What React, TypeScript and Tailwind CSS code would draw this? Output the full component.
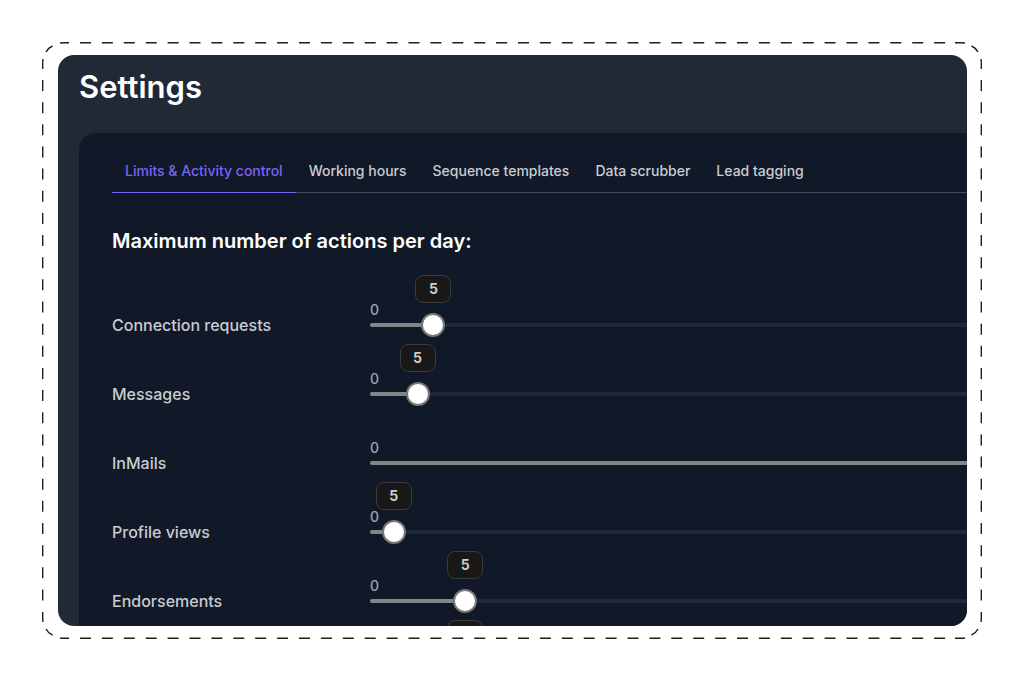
import { useState } from "react";

const tabs = [
  "Limits & Activity control",
  "Working hours",
  "Sequence templates",
  "Data scrubber",
  "Lead tagging",
];

const limits = [
  { id: "connections", label: "Connection requests", value: 5, max: 75 },
  { id: "messages", label: "Messages", value: 5, max: 100 },
  { id: "inmails", label: "InMails", value: 50, max: 50 },
  { id: "views", label: "Profile views", value: 5, max: 200 },
  { id: "endorsements", label: "Endorsements", value: 5, max: 50 },
  { id: "follows", label: "Follows", value: 5, max: 50 },
];

function DashedFrame() {
  return (
    <svg
      className="absolute inset-0 w-full h-full pointer-events-none"
      viewBox="0 0 940 597"
      preserveAspectRatio="none"
      fill="none"
      stroke="#1f1f1f"
      strokeWidth="1.4"
      aria-hidden="true"
    >
      {/* sides */}
      <path strokeDasharray="11 10.9" d="M38 .7H904M38 596.3H904" />
      <path strokeDasharray="11 11.15" d="M.7 38V568M939.3 38V568" />
      {/* short dashes beside each corner */}
      <path d="M27 .7H22Q20 .7 18 1M913 .7H919Q921 .7 923 1M27 596.3H22Q20 596.3 18 596M913 596.3H919Q921 596.3 923 596" />
      <path d="M.7 27V22Q.7 19 1 17M939.3 27V22Q939.3 19 939 17M.7 570V575Q.7 578 1 580M939.3 570V575Q939.3 578 939 580" />
      <path d="M4 10Q6 6 10.5 4M936 10Q934 6 929.5 4M4 587Q6 591 10.5 593M936 587Q934 591 929.5 593" />
    </svg>
  );
}

function LimitRow({ id, label, initial, max }: { id: string; label: string; initial: number; max: number }) {
  const [value, setValue] = useState(initial);
  const percent = (value / max) * 100;

  return (
    <div className="flex items-center h-[69px]">
      <label htmlFor={id} className="w-[258px] shrink-0 text-base font-medium text-[#c9ccd1]">
        {label}
      </label>
      <div className="relative flex-1 h-1 rounded-full bg-gray-800">
        <span className="absolute left-0 bottom-[9px] text-sm leading-4 font-medium text-[#9ca3af]">0</span>
        <div className="h-1 rounded-full bg-[#858585]" style={{ width: `${percent}%` }} />
        <output
          htmlFor={id}
          className="absolute bottom-6 -translate-x-1/2 w-9 h-7 flex items-center justify-center rounded-lg border border-[#3a3a3a] bg-[#181818] text-sm font-bold text-[#cccccc]"
          style={{ left: `${percent}%` }}
        >
          {value}
        </output>
        <input
          id={id}
          type="range"
          min={0}
          max={max}
          value={value}
          onChange={(e) => setValue(Number(e.target.value))}
          className="absolute -left-3 -top-2.5 h-6 w-[calc(100%+24px)] m-0 appearance-none bg-transparent cursor-pointer [&::-webkit-slider-thumb]:appearance-none [&::-webkit-slider-thumb]:w-6 [&::-webkit-slider-thumb]:h-6 [&::-webkit-slider-thumb]:rounded-full [&::-webkit-slider-thumb]:border-2 [&::-webkit-slider-thumb]:border-[#777777] [&::-webkit-slider-thumb]:bg-white"
        />
      </div>
    </div>
  );
}

export default function App() {
  const [active, setActive] = useState(tabs[0]);

  return (
    <main className="h-screen bg-white p-[42px] font-['Inter',sans-serif]">
      <div className="relative h-full pl-4 pr-[15px] py-[13px]">
        <DashedFrame />
        <div className="h-full overflow-hidden rounded-2xl bg-[#212937] pl-[21px] pt-3">
          <h1 className="text-[31px] leading-10 font-semibold text-white">Settings</h1>

          <section className="mt-[26px] w-[1276px] rounded-2xl bg-[#111827] px-[33px] pt-7">
            <div role="tablist" className="flex border-b border-[#414a57]">
              {tabs.map((tab) => (
                <button
                  key={tab}
                  type="button"
                  role="tab"
                  aria-selected={tab === active}
                  onClick={() => setActive(tab)}
                  className={
                    tab === active
                      ? "relative -mb-px px-[13px] pb-[11px] text-sm font-medium border-b border-[#7c63f5] text-[#7c63f5]"
                      : "-mb-px px-[13px] pb-[11px] text-sm font-medium border-b border-transparent text-[#c9ccd1]"
                  }
                >
                  {tab}
                </button>
              ))}
            </div>

            <h2 className="mt-[34px] text-xl leading-7 font-semibold text-white">Maximum number of actions per day:</h2>

            <div className="mt-[35px]">
              {limits.map((l) => (
                <LimitRow key={l.id} id={l.id} label={l.label} initial={l.value} max={l.max} />
              ))}
            </div>
          </section>
        </div>
      </div>
    </main>
  );
}
